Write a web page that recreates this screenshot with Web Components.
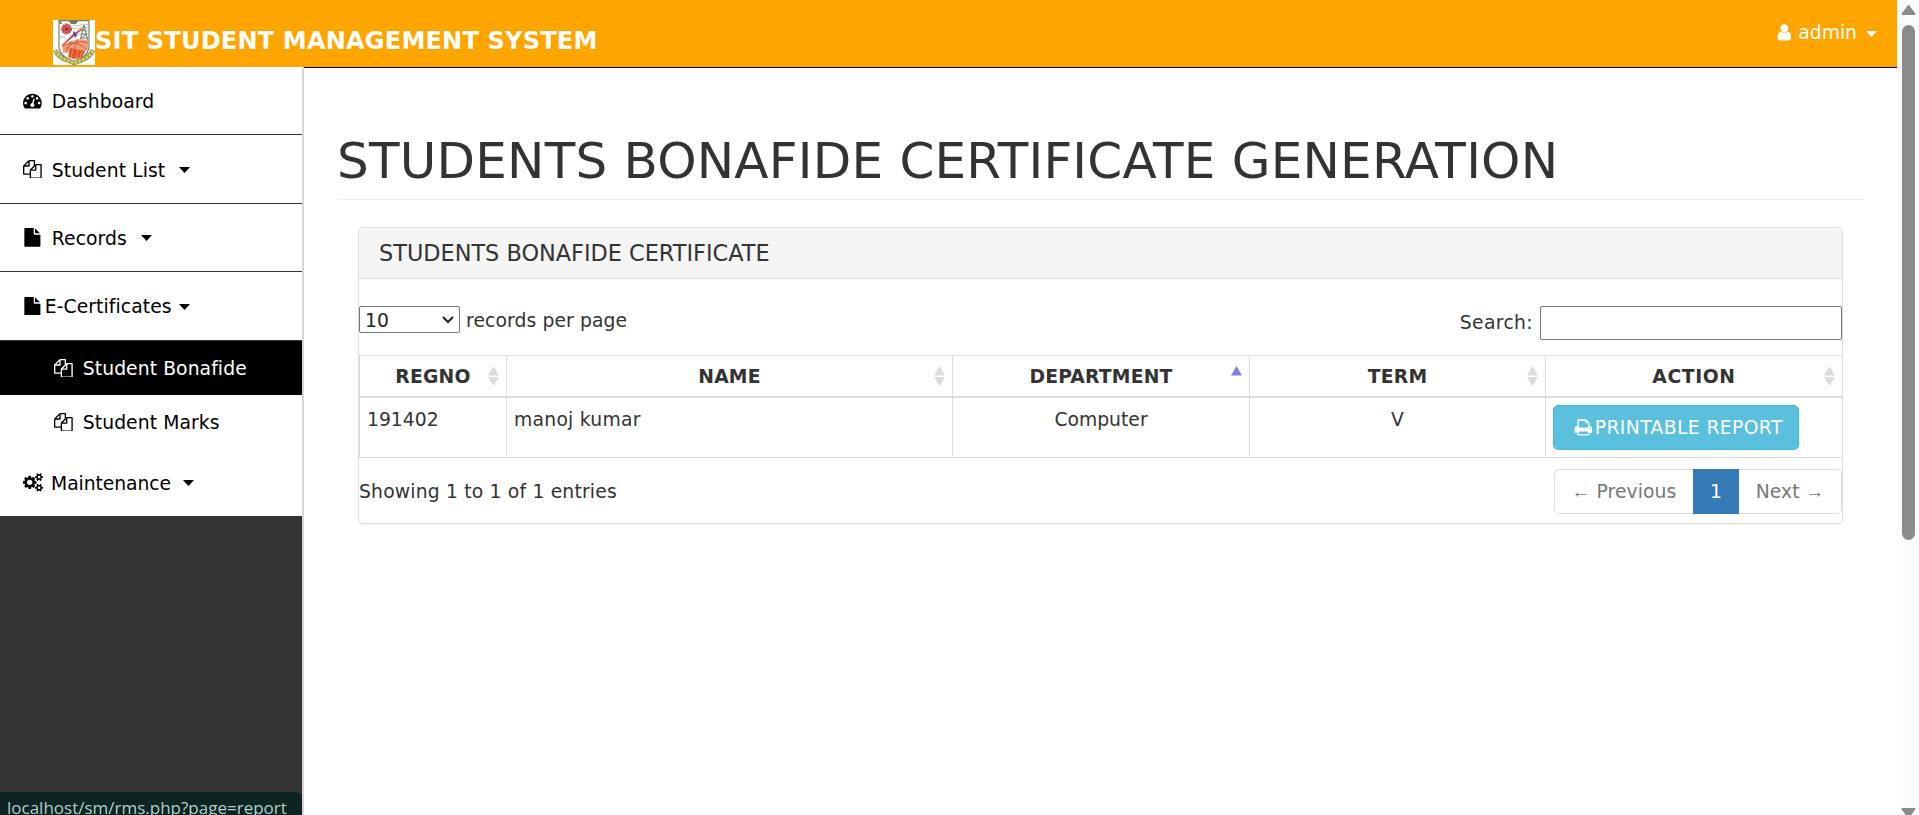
<!DOCTYPE html>
<html lang="en">
<head>
<meta charset="utf-8">
<title>SIT Student Management System</title>
<style>
html,body{margin:0;height:100%;overflow:hidden;background:#fff}
body{font:18.75px/27px Verdana,"DejaVu Sans",sans-serif;color:#333}
</style>
</head>
<body>
<sm-app></sm-app>
<script>
const ICONS={
files:"M1696 384q40 0 68 28t28 68v1216q0 40-28 68t-68 28h-960q-40 0-68-28t-28-68v-288h-544q-40 0-68-28t-28-68v-672q0-40 20-88t48-76l408-408q28-28 76-48t88-20h416q40 0 68 28t28 68v328q68-40 128-40h416zm-544 213l-299 299h299v-299zm-640-384l-299 299h299v-299zm196 647l316-316v-416h-384v416q0 40-28 68t-68 28h-416v640h512v-256q0-40 20-88t48-76zm956 804v-1152h-384v416q0 40-28 68t-68 28h-416v640h896z",
print:"M448 1536h896v-256h-896v256zm0-640h896v-384h-160q-40 0-68-28t-28-68v-160h-640v640zm1152 64q0-26-19-45t-45-19-45 19-19 45 19 45 45 19 45-19 19-45zm128 0v416q0 13-9.5 22.5t-22.5 9.5h-224v160q0 40-28 68t-68 28h-960q-40 0-68-28t-28-68v-160h-224q-13 0-22.5-9.5t-9.5-22.5v-416q0-79 56.5-135.5t135.5-56.5h64v-544q0-40 28-68t68-28h672q40 0 88 20t76 48l152 152q28 28 48 76t20 88v256h64q79 0 135.5 56.5t56.5 135.5z",
user:"M1536 1399q0 109-62.5 187t-150.5 78h-854q-88 0-150.5-78t-62.5-187q0-85 8.5-160.5t31.5-152 58.5-131 94-89 134.5-34.5q131 128 313 128t313-128q76 0 134.5 34.5t94 89 58.5 131 31.5 152 8.5 160.5zm-256-887q0 159-112.5 271.5t-271.5 112.5-271.5-112.5-112.5-271.5 112.5-271.5 271.5-112.5 271.5 112.5 112.5 271.5z",
file:"M1152 512v-472q22 14 36 28l408 408q14 14 28 36h-472zm-128 32q0 40 28 68t68 28h544v1056q0 40-28 68t-68 28h-1344q-40 0-68-28t-28-68v-1600q0-40 28-68t68-28h800v544z",
dash:"M384 1152q0-53-37.5-90.5t-90.5-37.5-90.5 37.5-37.5 90.5 37.5 90.5 90.5 37.5 90.5-37.5 37.5-90.5zm192-448q0-53-37.5-90.5t-90.5-37.5-90.5 37.5-37.5 90.5 37.5 90.5 90.5 37.5 90.5-37.5 37.5-90.5zm428 481l101-382q6-26-7.5-48.5t-38.5-29.5-48 6.5-30 39.5l-101 382q-60 5-107 43.5t-63 98.5q-20 77 20 146t117 89 146-20 89-117q16-60-6-117t-72-91zm660-33q0-53-37.5-90.5t-90.5-37.5-90.5 37.5-37.5 90.5 37.5 90.5 90.5 37.5 90.5-37.5 37.5-90.5zm-640-640q0-53-37.5-90.5t-90.5-37.5-90.5 37.5-37.5 90.5 37.5 90.5 90.5 37.5 90.5-37.5 37.5-90.5zm448 192q0-53-37.5-90.5t-90.5-37.5-90.5 37.5-37.5 90.5 37.5 90.5 90.5 37.5 90.5-37.5 37.5-90.5zm320 448q0 261-141 483-19 29-54 29h-1402q-35 0-54-29-141-221-141-483 0-182 71-348t191-286 286-191 348-71 348 71 286 191 191 286 71 348z",
cogs:"M896 896q0-106-75-181t-181-75-181 75-75 181 75 181 181 75 181-75 75-181zm768 512q0-52-38-90t-90-38-90 38-38 90q0 53 37.5 90.5t90.5 37.5 90.5-37.5 37.5-90.5zm0-1024q0-52-38-90t-90-38-90 38-38 90q0 53 37.5 90.5t90.5 37.5 90.5-37.5 37.5-90.5zm-384 421v185q0 10-7 19.5t-16 10.5l-155 24q-11 35-32 76 34 48 90 115 7 11 7 20 0 12-7 19-23 30-82.5 89.5t-78.5 59.5q-11 0-21-7l-115-90q-37 19-77 31-11 108-23 155-7 24-30 24h-186q-11 0-20-7.5t-10-17.5l-23-153q-34-10-75-31l-118 89q-7 7-20 7-11 0-21-8-144-133-144-160 0-9 7-19 10-14 41-53t47-61q-23-44-35-82l-152-24q-10-1-17-9.5t-7-19.5v-185q0-10 7-19.5t16-10.5l155-24q11-35 32-76-34-48-90-115-7-11-7-20 0-12 7-20 22-30 82-89t79-59q11 0 21 7l115 90q34-18 77-32 11-108 23-154 7-24 30-24h186q11 0 20 7.5t10 17.5l23 153q34 10 75 31l118-89q8-7 20-7 11 0 21 8 144 133 144 160 0 8-7 19-12 16-42 54t-45 60q23 48 34 82l152 23q10 2 17 10.5t7 19.5zm640 533v140q0 16-149 31-12 27-30 52 51 113 51 138 0 4-4 7-122 71-124 71-8 0-46-47t-52-68q-20 2-30 2t-30-2q-14 21-52 68t-46 47q-2 0-124-71-4-3-4-7 0-25 51-138-18-25-30-52-149-15-149-31v-140q0-16 149-31 13-29 30-52-51-113-51-138 0-4 4-7 4-2 35-20t59-34 30-16q8 0 46 46.5t52 67.5q20-2 30-2t30 2q51-71 92-112l6-2q4 0 124 70 4 3 4 7 0 25-51 138 17 23 30 52 149 15 149 31zm0-1024v140q0 16-149 31-12 27-30 52 51 113 51 138 0 4-4 7-122 71-124 71-8 0-46-47t-52-68q-20 2-30 2t-30-2q-14 21-52 68t-46 47q-2 0-124-71-4-3-4-7 0-25 51-138-18-25-30-52-149-15-149-31v-140q0-16 149-31 13-29 30-52-51-113-51-138 0-4 4-7 4-2 35-20t59-34 30-16q8 0 46 46.5t52 67.5q20-2 30-2t30 2q51-71 92-112l6-2q4 0 124 70 4 3 4 7 0 25-51 138 17 23 30 52 149 15 149 31z"};
const define=(name,render)=>customElements.define(name,class extends HTMLElement{
  connectedCallback(){
    if(this.shadowRoot)return;
    this.attachShadow({mode:"open"}).innerHTML="<style>*{box-sizing:border-box}</style>"+render(this);
  }
});

define("sm-icon",el=>{
  const n=el.getAttribute("name"),w=n==="cogs"?1920:1792;
  return `<style>:host{display:block;flex:none}svg{display:block;width:${w*18.75/1792}px;height:18.75px}</style>
  <svg viewBox="0 0 ${w} 1792" fill="currentColor"><path d="${ICONS[n]}"/></svg>`;
});
define("sm-caret",()=>`<style>:host{display:block;flex:none;width:11px;height:6px}svg{display:block}</style>
  <svg width="11" height="6" viewBox="0 0 11 6" fill="currentColor"><path d="M0 0H11L5.5 6Z"/></svg>`);

define("sm-crest",()=>`<style>:host{display:block;width:42px;height:45px;flex:none}svg{display:block}</style>
<svg width="42" height="45" viewBox="0 0 42 45"><path fill="#fff" d="M0 0H42V45H0Z"/>
<path fill="#fdfdfb" stroke="#7c8074" stroke-width="1.2" d="M6 .7H36V28Q34 37 21 42Q8 37 6 28Z"/>
<path fill="#777b60" d="M15 0H26L23 4H18ZM6 1H8L9 4H7Z"/>
<circle cx="13.5" cy="9" r="4.3" fill="#d9605f" stroke="#b8393e" stroke-width="2.2" stroke-dasharray="1.6 .7"/><circle cx="13.5" cy="9" r="1.8" fill="#a52b35"/>
<path stroke="#9aa597" stroke-width=".7" fill="none" d="M20 5Q24 7 28 5T35 5M19 8Q24 10 28 8T35 8M25 11H35M24 14H35M7 17H12"/>
<path stroke="#667064" stroke-width=".9" fill="none" d="M31 5L27 20M31 5L35 21M29 10H33M28 14H34L28 18H35"/>
<path stroke="#e34a54" stroke-width="1.5" d="M9 26L21 14L29 9"/><path fill="#59519a" d="M20 11L24 14L23 18L20 15Z"/>
<path fill="#f0a07c" d="M9 27Q20 17 35 20V29L29 34L19 31L10 33Z"/><path stroke="#d65f3a" stroke-width="1" fill="none" d="M10 26Q22 18 34 30M12 29Q24 18 35 23M18 21L13 33M25 19L19 34"/>
<path fill="#e45226" d="M17 28L32 31L29 38L21 39L15 37Z"/><path stroke="#f08a5c" d="M20 29L18 38M25 30L23 39M29 31L27 38"/>
<path fill="none" stroke="#8c934f" stroke-width="4.6" d="M2 30Q6 38 14 40L21 43L29 40Q37 37 40 30"/>
<path fill="none" stroke="#d0d066" stroke-width="2.8" stroke-dasharray="3 1" d="M2 30Q6 38 14 40L21 43L29 40Q37 37 40 30"/></svg>`);

define("sm-header",()=>`<style>
:host{display:flex;height:68px;background:#ffa500;border-bottom:1px solid #000;color:#fff;justify-content:space-between;box-sizing:border-box}
.b{display:flex;padding:20px 0 0 53px;font-weight:bold;font-size:24px;line-height:42px;letter-spacing:.22px}
.b span{white-space:nowrap}
.u{display:flex;padding:0 20px 0 0;height:64px;align-items:center}
.u sm-icon{margin-right:5px}.u span{margin-right:9px}.u sm-caret{margin-top:4px}
</style><div class="b"><sm-crest></sm-crest><span>SIT STUDENT MANAGEMENT SYSTEM</span></div>
<div class="u"><sm-icon name="user"></sm-icon><span>admin</span><sm-caret></sm-caret></div>`);

define("sm-nav-item",el=>`<style>
:host{display:flex;align-items:center;height:var(--h,68px);box-sizing:border-box;padding-left:23px;background:#fff;color:#000;border-bottom:1px solid #333436;white-space:nowrap;letter-spacing:.08px}
:host([sub]){height:54px;padding-left:54px;border:0}
:host([active]){background:#000;color:#fff}
:host([plain]){border:0}
span{padding-top:2px}
:host([sub]) span,:host([tight]) span{padding-top:0}
sm-icon{margin-right:var(--g,10px)}
sm-caret{margin-left:var(--c,14px);margin-top:1px}
</style><sm-icon name="${el.getAttribute("icon")}"></sm-icon><span><slot></slot></span>${el.hasAttribute("menu")?"<sm-caret></sm-caret>":""}`);

define("sm-sidebar",()=>`<style>
:host{display:flex;flex-direction:column;width:304px;height:748px;margin-top:-1px;z-index:1;background:#333436;border-right:2px solid #d6d6d8;box-sizing:border-box;flex:none}
.s{margin-top:auto;height:23px;background:#0c2422;border-radius:0 6px 0 0;overflow:hidden;padding-left:7px;font:17px/32px "Open Sans","Noto Sans",sans-serif;color:#b4cec8;white-space:nowrap}
</style>
<sm-nav-item icon="dash">Dashboard</sm-nav-item>
<sm-nav-item icon="files" menu style="--h:69px">Student List</sm-nav-item>
<sm-nav-item icon="file" menu>Records</sm-nav-item>
<sm-nav-item icon="file" menu tight style="--h:69px;--c:7px;--g:3px">E-Certificates</sm-nav-item>
<sm-nav-item icon="files" sub active>Student Bonafide</sm-nav-item>
<sm-nav-item icon="files" sub>Student Marks</sm-nav-item>
<sm-nav-item icon="cogs" menu plain style="--h:67px;--g:8px;--c:12px;letter-spacing:-.08px">Maintenance</sm-nav-item>
<div class="s">localhost/sm/rms.php?page=report</div>`);

define("sm-sort",el=>{
  const up=el.hasAttribute("up");
  return `<style>:host{display:block;width:11px;height:20px}svg{display:block}</style><svg width="11" height="20" viewBox="0 0 11 20" fill="${up?"#7d80df":"#dcdcdc"}"><path d="M5.5 0L11 9.5H0Z"/>${up?"":'<path d="M0 11H11L5.5 20Z"/>'}</svg>`;
});
define("sm-table",()=>`<style>
:host{display:grid;grid-template-columns:147px 446px 297px 296px 297px;grid-template-rows:42px 60px;border-top:1px solid #ddd;border-left:1px solid #ddd;margin-right:-1px;box-sizing:border-box}
.h,.c{border-right:1px solid #ddd}
.h{display:grid;grid-template-columns:18px 1fr 18px;align-items:center;justify-items:center;border-bottom:2px solid #ddd;font-weight:bold;letter-spacing:.2px}
.h span{grid-column:2}
.h sm-sort{justify-self:start}
.h:last-of-type{letter-spacing:.2px}
.c{border-bottom:1px solid #ddd;padding:8px 7px 0}
.m{text-align:center}
.k{letter-spacing:.25px}
.a{padding:7px 7px 0}
.btn{display:flex;align-items:center;width:246px;height:45px;border:1px solid #46b8da;background:#5bc0de;border-radius:5px;color:#fff;padding-left:20px;white-space:nowrap;letter-spacing:.38px}
.btn sm-icon{margin-right:2px}
</style>
${["REGNO","NAME","DEPARTMENT","TERM","ACTION"].map((t,i)=>`<div class="h"><span${i==4?' style="letter-spacing:.6px"':""}>${t}</span><sm-sort${i==2?" up":""}></sm-sort></div>`).join("")}
<div class="c">191402</div><div class="c k">manoj kumar</div><div class="c m">Computer</div><div class="c m">V</div>
<div class="c a"><div class="btn"><sm-icon name="print"></sm-icon><span>PRINTABLE REPORT</span></div></div>`);

define("sm-pager",()=>`<style>
:host{display:flex;height:45px;width:288px;line-height:43px;color:#777;text-align:center;white-space:nowrap}
div{border:1px solid #ddd}
i{font-family:"Liberation Sans",Arial,sans-serif;font-style:normal}
.p{width:139px;border-right:0;border-radius:5px 0 0 5px;letter-spacing:.1px}
.o{width:46px;background:#337ab7;border-color:#337ab7;color:#fff}
.n{width:103px;border-left:0;border-radius:0 5px 5px 0}
</style><div class="p"><i>←</i> Previous</div><div class="o">1</div><div class="n">Next <i>→</i></div>`);

define("sm-panel",()=>`<style>
:host{display:block;width:1485px;height:297px;border:1px solid #ddd;border-radius:5px;box-shadow:0 1px 1px rgba(0,0,0,.05);box-sizing:border-box}
.t{height:51px;border-bottom:1px solid #ddd;background:#f5f5f5;border-radius:4px 4px 0 0;padding-left:20px;font-size:22.4px;line-height:51px}
.f{display:flex;justify-content:space-between;height:76px;padding-top:27px}
.l,.r{display:flex;align-items:flex-start}
.l span{line-height:29px;letter-spacing:.1px}
.sel{display:flex;align-items:center;justify-content:space-between;width:101px;height:27px;border:1px solid #767676;border-radius:2px;padding:1px 5px 0 5px;margin-right:6px;color:#222}
.r span{line-height:33px;margin-right:7px;letter-spacing:.35px}
.in{width:302px;height:34px;border:1px solid #767676;border-radius:2px}
.b{display:flex;justify-content:space-between;padding-top:11px}
.b span{line-height:45px;letter-spacing:.18px}
</style><div class="t">STUDENTS BONAFIDE CERTIFICATE</div>
<div class="f"><div class="l"><div class="sel">10<svg width="12" height="8" viewBox="0 0 12 8" fill="none" stroke="#222" stroke-width="2"><path d="M1 1L6 6L11 1"/></svg></div><span>records per page</span></div>
<div class="r"><span>Search:</span><div class="in"></div></div></div>
<sm-table></sm-table>
<div class="b"><span>Showing 1 to 1 of 1 entries</span><sm-pager></sm-pager></div>`);

define("sm-scrollbar",()=>`<style>
:host{display:block;width:22px;height:815px;background:#fcfcfc;flex:none}
svg{display:block}
</style><svg width="22" height="815" viewBox="0 0 22 815" fill="#8b8b8b"><path stroke="#8b8b8b" stroke-width="2" stroke-linejoin="round" d="M11.5 6L17.5 14H5.5ZM5.5 809H17.5L11.5 817Z"/><rect x="5" y="25" width="13" height="515" rx="6.5"/></svg>`);

define("sm-app",()=>`<style>
:host{display:flex;width:1919px;height:815px;overflow:hidden}
.p{width:1897px}
.m{display:flex}
main{padding:52px 33px 0}
h1{margin:0;width:1527px;height:80px;border-bottom:1px solid #eee;font-size:50px;font-weight:normal;line-height:82px;letter-spacing:.22px;white-space:nowrap}
sm-panel{margin:27px 0 0 21px}
</style><div class="p"><sm-header></sm-header><div class="m"><sm-sidebar></sm-sidebar><main><h1>STUDENTS BONAFIDE CERTIFICATE GENERATION</h1><sm-panel></sm-panel></main></div></div><sm-scrollbar></sm-scrollbar>`);
</script>
</body>
</html>
